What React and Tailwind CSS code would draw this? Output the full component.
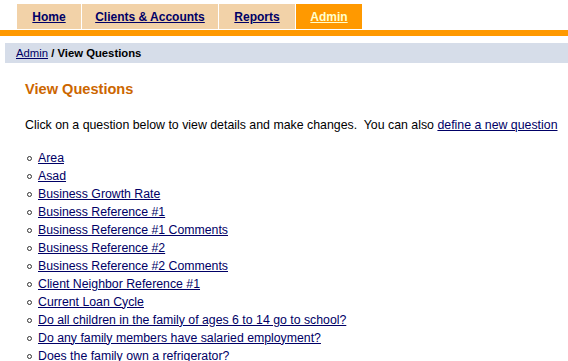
export default function App() {
  const tabs = [
    { label: "Home", w: "w-[64px]", active: false },
    { label: "Clients & Accounts", w: "w-[136px]", active: false },
    { label: "Reports", w: "w-[76px]", active: false },
    { label: "Admin", w: "w-[66px]", active: true },
  ];
  const items = [
    "Area",
    "Asad",
    "Business Growth Rate",
    "Business Reference #1",
    "Business Reference #1 Comments",
    "Business Reference #2",
    "Business Reference #2 Comments",
    "Client Neighbor Reference #1",
    "Current Loan Cycle",
    "Do all children in the family of ages 6 to 14 go to school?",
    "Do any family members have salaried employment?",
    "Does the family own a refrigerator?",
  ];
  return (
    <div className="w-[568px] h-[361px] overflow-hidden bg-white text-black font-['Liberation_Sans',Arial,sans-serif]">
      <div className="flex gap-[1px] pl-[17px] pt-[4px]">
        {tabs.map((t) => (
          <div
            key={t.label}
            className={`${t.w} h-[25px] flex items-center justify-center text-[12px] font-bold underline ${
              t.active ? "bg-[#ff9900] text-[#ffffcc]" : "bg-[#f2d2a8] text-[#000066]"
            }`}
          >
            {t.label}
          </div>
        ))}
      </div>
      <div className="mt-[1px] h-[6px] bg-[#ff9900]" />
      <div className="mt-[7px] ml-[5px] h-[20px] bg-[#d6dde9] flex items-center pl-[11px] text-[11.3px]">
        <span className="underline text-[#000066]">Admin</span>
        <span className="font-bold">&nbsp;/ View Questions</span>
      </div>
      <div className="pl-[25px]">
        <h1 className="pt-[17px] text-[14.6px] leading-[18px] font-bold text-[#cc6600]">View Questions</h1>
        <p className="mt-[19px] text-[12.35px] leading-[16px] whitespace-pre">
          {"Click on a question below to view details and make changes.  You can also "}
          <span className="underline text-[#000066]">define a new question</span>
        </p>
        <ul className="mt-[16px]">
          {items.map((it) => (
            <li key={it} className="flex items-center h-[18px] text-[12.3px] whitespace-nowrap">
              <span className="ml-[2px] mr-[6px] w-[5px] h-[5px] shrink-0 rounded-full border border-[#333]" />
              <span className="underline text-[#000066] leading-[15px]">{it}</span>
            </li>
          ))}
        </ul>
      </div>
    </div>
  );
}
